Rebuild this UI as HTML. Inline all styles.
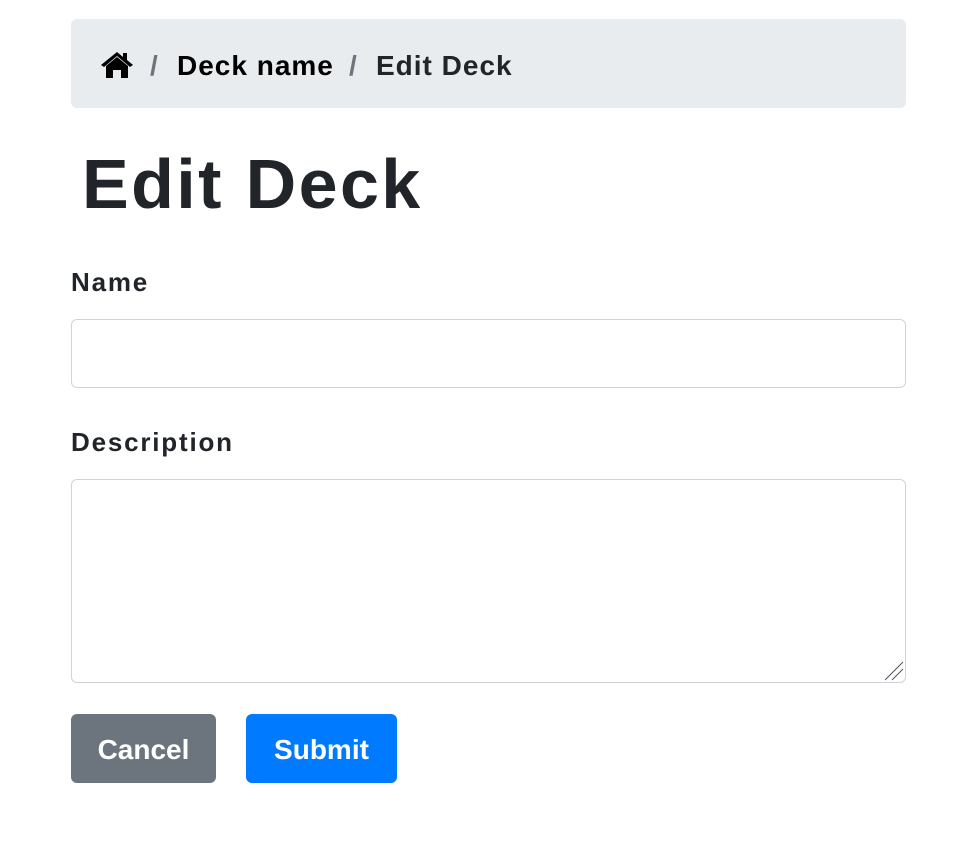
<!DOCTYPE html>
<html><head><style>
body{margin:0;background:#fff;font-family:"Liberation Sans",sans-serif;color:#212529;width:970px;height:842px;overflow:hidden;position:relative}
.bc{position:absolute;left:71px;top:19px;width:835px;height:89px;background:#e9ecef;border-radius:6px}
.bc span{position:absolute;top:31px;font-size:28px;font-weight:bold;line-height:32px;letter-spacing:1px}
h1{position:absolute;left:82px;top:144px;margin:0;font-size:70px;line-height:80px;font-weight:bold;letter-spacing:2.4px}
.lbl{position:absolute;left:71px;font-size:26px;font-weight:bold;line-height:30px;letter-spacing:1.8px}
.in{position:absolute;left:71px;width:833px;border:1px solid #ced4da;border-radius:6px;background:#fff}
.btn{position:absolute;top:714px;height:69px;border-radius:6px;color:#fff;font-size:28px;font-weight:bold;line-height:71px;text-align:center}
</style></head><body>
<div class="bc">
<svg style="position:absolute;left:29px;top:32px" width="34" height="28" viewBox="0 0 34 28"><path d="M17 1 L1 14 L4 16 L17 5 L30 16 L33 14 L27 9 L27 2 L23 2 L23 6 Z" fill="#000"/><path d="M6 15 L17 6 L28 15 L28 27 L21 27 L21 19 L13 19 L13 27 L6 27 Z" fill="#000"/></svg>
<span style="left:79px;color:#6c757d">/</span>
<span style="left:106px;color:#000">Deck name</span>
<span style="left:278px;color:#6c757d">/</span>
<span style="left:305px;color:#212529">Edit Deck</span>
</div>
<h1>Edit Deck</h1>
<div class="lbl" style="top:267px">Name</div>
<div class="in" style="top:319px;height:67px"></div>
<div class="lbl" style="top:427px">Description</div>
<div class="in" style="top:479px;height:202px">
<svg style="position:absolute;right:1px;bottom:1px" width="22" height="22"><path d="M21 3 L3 21 M21 10 L10 21" stroke="#555" stroke-width="1"/></svg>
</div>
<div class="btn" style="left:71px;width:145px;background:#6c757d">Cancel</div>
<div class="btn" style="left:246px;width:151px;background:#007bff">Submit</div>
</body></html>
